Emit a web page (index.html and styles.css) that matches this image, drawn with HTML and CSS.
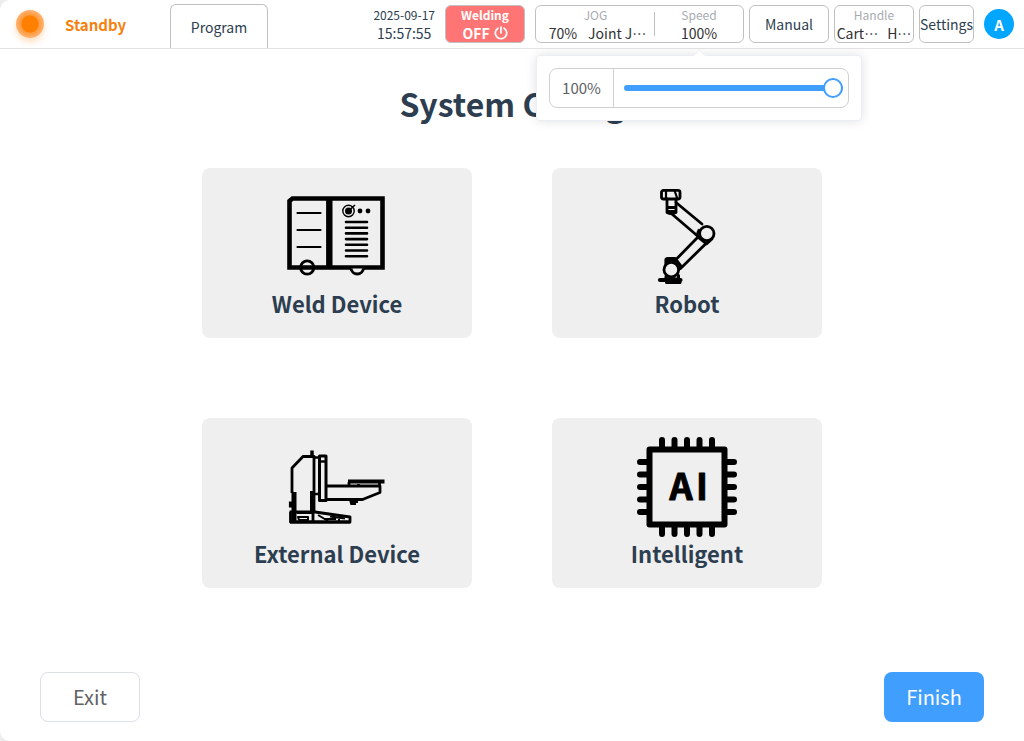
FILE: index.html
```
<!DOCTYPE html>
<html lang="zh-CN">
<head>
    <meta charset="UTF-8">
    <meta name="viewport" content="width=device-width, initial-scale=1.0">
    <title>System Config</title>
    <link rel="stylesheet" href="styles.css">
</head>
<body>
    <header class="topbar">
        <div class="status">
            <span class="status-light"></span>
            <span class="status-text">Standby</span>
        </div>
        <a class="tab" href="#program">Program</a>

        <div class="tools">
            <div class="clock">
                <div class="date">2025-09-17</div>
                <div class="time">15:57:55</div>
            </div>
            <button class="welding" type="button">
                <span class="welding-title">Welding</span>
                <span class="welding-state">OFF
                    <svg class="power" viewBox="0 0 14 14" fill="none" stroke="currentColor" stroke-width="1.700" stroke-linecap="round">
                        <path d="M7 1v6M4 2.200a5.700 5.700 0 1 0 6 0"/>
                    </svg>
                </span>
            </button>
            <div class="box motion">
                <button class="field jog" type="button">
                    <span class="caption">JOG</span>
                    <span class="values"><span>70%</span><span>Joint J…</span></span>
                </button>
                <div class="speed">
                    <button class="field" type="button">
                        <span class="caption">Speed</span>
                        <span class="values">100%</span>
                    </button>
                    <div class="popover">
                        <div class="speed-control">
                            <label class="speed-value" for="speedRange">100%</label>
                            <input class="speed-range" type="range" id="speedRange" min="1" max="100" value="100">
                        </div>
                    </div>
                </div>
            </div>
            <button class="box manual" type="button">Manual</button>
            <button class="box field handle" type="button">
                <span class="caption">Handle</span>
                <span class="values"><span>Cart…</span><span>H…</span></span>
            </button>
            <button class="box settings" type="button">Settings</button>
            <button class="avatar" type="button">A</button>
        </div>
    </header>

    <main class="page">
        <h1>System Config</h1>

        <div class="cards">
            <button class="card" type="button">
                <svg class="card-icon" viewBox="0 0 100 100" fill="none" stroke="#000">
                    <path d="M2.500 14L5.500 11.500H95.500V80.500H2.500Z" stroke-width="4.600"/>
                    <path d="M42.300 10V82" stroke-width="6.400"/>
                    <path d="M10.500 26H33.500M10.500 43H33.500M10.500 60H33.500" stroke-width="2.200" stroke-linecap="round"/>
                    <path d="M59 35H80M59 40.700H80M59 46.400H80M59 52.100H80M59 57.800H80M59 63.500H80M59 69.200H80" stroke-width="2.600" stroke-linecap="round"/>
                    <circle cx="61.500" cy="24" r="5.700" stroke-width="1.400"/>
                    <circle cx="61.500" cy="24" r="3.500" fill="#000" stroke="none"/>
                    <path d="M61.500 24L68 18" stroke-width="1.600"/>
                    <circle cx="73" cy="24" r="2.400" fill="#000" stroke="none"/>
                    <circle cx="81" cy="24" r="2.400" fill="#000" stroke="none"/>
                    <circle cx="20.200" cy="80.500" r="6.600" stroke-width="2.800"/>
                    <path d="M64 81.500H76.500A6.300 6.300 0 0 1 64 81.500Z" fill="#efefef" stroke="none"/>
                    <path d="M64 81.500A6.300 6.300 0 0 0 76.500 81.500" stroke-width="2.800"/>
                </svg>
                <span class="card-name">Weld Device</span>
            </button>

            <button class="card" type="button">
                <svg class="card-icon" viewBox="0 0 100 100" fill="none" stroke="#000" stroke-width="2.800" stroke-linejoin="round" stroke-linecap="round">
                    <rect x="24.500" y="3.300" width="18.500" height="8.700" rx="2"/>
                    <path d="M29 3.500V12M37.500 3.500L40.500 12" stroke-width="2.200"/>
                    <path d="M30 12V25.500Q34.500 28 39 25.500V12M30 20.500H39M31 24.500H38" stroke-width="2.800"/>
                    <path d="M39 15.500L65 37M35.500 27.500L60 48.500"/>
                    <circle cx="69.800" cy="46.500" r="7.200"/>
                    <path d="M62 43Q59 48 62 51L69.500 57L75 52" stroke-width="2.600"/>
                    <path d="M60.500 50.500L39.500 72M68 57.500L43.500 81.500"/>
                    <path d="M29 78.500V73Q29 71.500 31 71.500H38L44 79.500L41.500 82.500M31 74.500H38" stroke-width="3.200"/>
                    <circle cx="34.300" cy="82.700" r="7.300" fill="#efefef"/>
                    <path d="M29 89.500V92H41.500V88.500" stroke-width="3"/>
                    <path d="M23 93H43.500" stroke-width="4.200"/>
                    <path d="M29.500 95.500H43" stroke-width="3"/>
                </svg>
                <span class="card-name">Robot</span>
            </button>

            <button class="card" type="button">
                <svg class="card-icon" viewBox="0 0 100 100" fill="none" stroke="#000" stroke-width="2.800" stroke-linejoin="round">
                    <path d="M5 56V31L16 19.500H27V75"/>
                    <path d="M25 13.500V19" stroke-width="3.500"/>
                    <path d="M26 20.500H32M28 57H31" stroke-width="2.400"/>
                    <path d="M32.500 19H39V63.500H32.500Z" stroke-width="3"/>
                    <path d="M32 24.500H39" stroke-width="2.400"/>
                    <path d="M39.500 49H93V55.500L75.500 62.500H39.500"/>
                    <path d="M61 44.500H97.500" stroke-width="4.200"/>
                    <path d="M62 45V49M71.500 47V49M92.500 45V50"/>
                    <path d="M62 63H71V66H69V68H63.500Z" fill="#000" stroke="none"/>
                    <path d="M7 55V85M25.500 54V75" stroke-width="5"/>
                    <path d="M3.500 64.500V70.500" stroke-width="3.200"/>
                    <path d="M2.500 75H28L63 80V85H3.500V75M26 75V85"/>
                    <path d="M10 75.500H27" stroke-width="3"/>
                    <path d="M11 80H21V83H12ZM31 78L41 84M37 82H49M43 79.500L58 81.500M52 80V85" stroke-width="2"/>
                    <path d="M3 85H63.500" stroke-width="3.200"/>
                </svg>
                <span class="card-name">External Device</span>
            </button>

            <button class="card" type="button">
                <svg class="card-icon" viewBox="0 0 100 100" fill="none" stroke="#000" stroke-width="6" stroke-linejoin="round">
                    <rect x="12.500" y="12.500" width="75" height="75"/>
                    <path d="M25 3V12M37.500 3V12M50 3V12M62.500 3V12M75 3V12M25 88V97M37.500 88V97M50 88V97M62.500 88V97M75 88V97" stroke-linecap="round"/>
                    <path d="M3 25H12M3 37.500H12M3 50H12M3 62.500H12M3 75H12M88 25H97M88 37.500H97M88 50H97M88 62.500H97M88 75H97" stroke-linecap="round"/>
                    <text class="chip-text" x="44" y="63">A</text>
                    <text class="chip-text" x="65" y="63">I</text>
                </svg>
                <span class="card-name">Intelligent</span>
            </button>
        </div>

        <div class="actions">
            <button class="action exit" type="button">Exit</button>
            <button class="action finish" type="button">Finish</button>
        </div>
    </main>

    <script>
        const range = document.getElementById('speedRange');
        range.addEventListener('input', function() {
            document.querySelector('.speed-value').textContent = range.value + '%';
            range.style.setProperty('--fill', range.value + '%');
        });
    </script>
</body>
</html>
```
FILE: styles.css
```
* {
    box-sizing: border-box;
}
body {
    font-family: "Noto Sans CJK SC", "Noto Sans", sans-serif;
    font-size: 14px;
    color: #2c3e50;
    background-color: #ededed;
    margin: 0;
    min-height: 100vh;
    display: flex;
    flex-direction: column;
}
button {
    font-family: inherit;
    font-size: inherit;
    color: inherit;
    padding: 0;
    border: none;
    background: none;
    cursor: pointer;
}
.topbar {
    display: flex;
    align-items: center;
    height: 49px;
    padding: 0 10px 0 16px;
    background-color: #fff;
    border-bottom: 1px solid #e4e4e4;
    border-radius: 10px 0 0 0;
}
.status {
    display: flex;
    align-items: center;
    gap: 21px;
    width: 154px;
}
.status-light {
    width: 28px;
    height: 28px;
    border-radius: 50%;
    background: radial-gradient(circle, #ff8000 0 8px, #ff9a3c 9px, #ffb273 14px);
    box-shadow: 0 4px 6px rgba(255, 128, 0, 0.25);
}
.status-text {
    font-size: 15px;
    font-weight: bold;
    color: #f5820f;
}
.tab {
    align-self: flex-end;
    width: 98px;
    height: 44px;
    line-height: 44px;
    text-align: center;
    color: #2c3e50;
    text-decoration: none;
    border: 1px solid #c0c0c0;
    border-bottom: none;
    border-radius: 6px 6px 0 0;
}
.tools {
    display: flex;
    align-items: center;
    gap: 5px;
    margin-left: auto;
}
.clock {
    text-align: center;
    margin-right: 5px;
}
.date {
    font-size: 12px;
    line-height: 18px;
}
.time {
    line-height: 18px;
}
.welding {
    display: flex;
    flex-direction: column;
    align-items: center;
    width: 80px;
    height: 38px;
    margin-right: 5px;
    font-weight: bold;
    color: #fff;
    background-color: #ff7575;
    border: 1px solid #c0c0c0;
    border-radius: 6px;
}
.welding-title {
    font-size: 12px;
    line-height: 18px;
}
.welding-state {
    display: flex;
    align-items: center;
    gap: 4px;
    line-height: 18px;
}
.power {
    width: 14px;
    height: 14px;
}
.box {
    height: 38px;
    border: 1px solid #c0c0c0;
    border-radius: 6px;
}
.motion {
    display: flex;
    align-items: center;
}
.field {
    display: flex;
    flex-direction: column;
    align-items: center;
}
.caption {
    font-size: 12px;
    line-height: 18px;
    color: #a8abb2;
}
.values {
    display: flex;
    gap: 11px;
    line-height: 18px;
    color: #303133;
    white-space: nowrap;
}
.jog {
    width: 119px;
    padding-left: 4px;
}
.jog .caption {
    padding-right: 4px;
}
.speed {
    position: relative;
}
.speed .field {
    width: 88px;
}
/* divider between JOG and speed */
.speed::before {
    content: "";
    position: absolute;
    top: 6px;
    left: -1px;
    width: 1px;
    height: 24px;
    background-color: #c0c0c0;
}
.manual {
    width: 80px;
}
.handle {
    width: 80px;
}
.handle .values {
    gap: 9px;
}
.settings {
    width: 55px;
}
.avatar {
    width: 30px;
    height: 30px;
    margin-left: 5px;
    font-size: 15px;
    font-weight: bold;
    color: #fff;
    background-color: #00a6ff;
    border-radius: 50%;
}
.popover {
    position: absolute;
    top: 49px;
    left: 50%;
    z-index: 10;
    width: 326px;
    padding: 12px;
    background-color: #fff;
    border: 1px solid #ebeef5;
    border-radius: 4px;
    box-shadow: 0 0 12px rgba(0, 0, 0, 0.12);
    transform: translateX(-50%);
}
.popover::before {
    content: "";
    position: absolute;
    top: -5px;
    left: 50%;
    width: 8px;
    height: 8px;
    margin-left: -4px;
    background-color: #fff;
    border: 1px solid #ebeef5;
    border-right: none;
    border-bottom: none;
    transform: rotate(45deg);
}
.speed-control {
    display: flex;
    align-items: center;
    height: 40px;
    padding-right: 5px;
    border: 1px solid #d0d0d0;
    border-radius: 8px;
}
.speed-value {
    width: 64px;
    font-size: 15px;
    line-height: 38px;
    text-align: center;
    color: #606266;
    border-right: 1px solid #d0d0d0;
}
.speed-range {
    --fill: 100%;
    flex: 1;
    min-width: 0;
    height: 20px;
    margin: 0 0 0 10px;
    background: none;
    appearance: none;
}
.speed-range::-webkit-slider-runnable-track {
    height: 6px;
    border-radius: 3px;
    background: linear-gradient(to right, #409eff var(--fill), #e4e7ed var(--fill));
}
.speed-range::-webkit-slider-thumb {
    appearance: none;
    width: 20px;
    height: 20px;
    margin-top: -7px;
    background-color: #fff;
    border: 2px solid #409eff;
    border-radius: 50%;
}
.page {
    flex: 1;
    display: flex;
    flex-direction: column;
    align-items: center;
    padding: 30px 40px 19px;
    background-color: #fff;
    border-radius: 0 0 0 10px;
}
h1 {
    margin: 0 0 41px;
    font-size: 32px;
    line-height: 48px;
}
.cards {
    display: grid;
    grid-template-columns: repeat(2, 270px);
    gap: 80px;
    margin-bottom: 40px;
}
.card {
    display: flex;
    flex-direction: column;
    align-items: center;
    padding: 19px 0;
    background-color: #efefef;
    border-radius: 8px;
}
.card-icon {
    width: 100px;
    height: 100px;
}
.chip-text {
    font-size: 36px;
    font-weight: bold;
    text-anchor: middle;
    fill: #000;
    stroke-width: 1px;
}
.card-name {
    font-size: 22px;
    font-weight: bold;
    line-height: 32px;
}
.actions {
    display: flex;
    justify-content: space-between;
    width: 100%;
    margin-top: auto;
}
.action {
    width: 100px;
    height: 50px;
    padding-bottom: 2px;
    font-size: 20px;
    border-radius: 8px;
}
.exit {
    color: #606266;
    border: 1px solid #dcdfe6;
}
.finish {
    color: #fff;
    background-color: #409eff;
}
```
